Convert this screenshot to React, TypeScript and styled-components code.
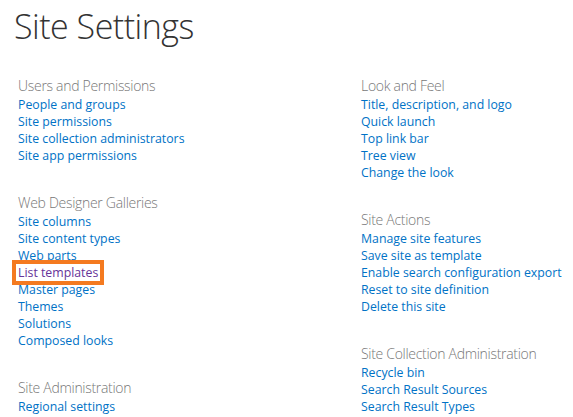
import styled, { createGlobalStyle } from "styled-components";

const GlobalStyle = createGlobalStyle`
  html, body {
    margin: 0;
    padding: 0;
    background: #ffffff;
  }
  body {
    font-family: "Segoe UI", "Open Sans", "Liberation Sans", sans-serif;
  }
`

const Page = styled.div`
  width: 573px;
  height: 417px;
  overflow: hidden;
  padding: 0 0 0 18px;
  box-sizing: border-box;
`

const Title = styled.h1`
  margin: 0 0 0 -4px;
  padding-top: 3px;
  font-size: 34px;
  font-weight: 300;
  letter-spacing: -0.5px;
  line-height: 46px;
  color: #333333;
  height: 74px;
`

const Columns = styled.div`
  display: grid;
  grid-template-columns: 343px 1fr;
`

const Column = styled.div`
  display: flex;
  flex-direction: column;
`

const Section = styled.div`
  display: flex;
  flex-direction: column;
  margin-bottom: 31px;
`

const Heading = styled.h3`
  margin: 0;
  font-size: 14px;
  font-weight: 300;
  letter-spacing: -0.3px;
  line-height: 18px;
  color: #777777;
`

const LinkList = styled.ul`
  list-style-type: none;
  margin: 0;
  padding: 0;
`

const LinkItem = styled.li`
  line-height: 17px;
  height: 17px;
`

const Link = styled.a<{ $visited?: boolean; $highlight?: boolean }>`
  font-size: 12.3px;
  color: ${(p) => (p.$visited ? "#663399" : "#0072c6")};
  text-decoration: none;
  white-space: nowrap;
  ${(p) =>
    p.$highlight &&
    `
    outline: 4px solid #f47a20;
    outline-offset: 0px;
    padding: 0 2px;
    margin-left: -2px;
  `}
`

type SectionData = {
  title: string;
  links: string[];
};

const leftSections: SectionData[] = [
  {
    title: "Users and Permissions",
    links: ["People and groups", "Site permissions", "Site collection administrators", "Site app permissions"],
  },
  {
    title: "Web Designer Galleries",
    links: [
      "Site columns",
      "Site content types",
      "Web parts",
      "List templates",
      "Master pages",
      "Themes",
      "Solutions",
      "Composed looks",
    ],
  },
  {
    title: "Site Administration",
    links: ["Regional settings"],
  },
];

const rightSections: SectionData[] = [
  {
    title: "Look and Feel",
    links: ["Title, description, and logo", "Quick launch", "Top link bar", "Tree view", "Change the look"],
  },
  {
    title: "Site Actions",
    links: [
      "Manage site features",
      "Save site as template",
      "Enable search configuration export",
      "Reset to site definition",
      "Delete this site",
    ],
  },
  {
    title: "Site Collection Administration",
    links: ["Recycle bin", "Search Result Sources", "Search Result Types"],
  },
];

const SettingsSection = ({ title, links }: SectionData) => {
  return (
    <Section>
      <Heading>{title}</Heading>
      <LinkList>
        {links.map((link) => {
          const picked = link === "List templates";
          return (
            <LinkItem key={link}>
              <Link href="#" $visited={picked} $highlight={picked}>
                {link}
              </Link>
            </LinkItem>
          );
        })}
      </LinkList>
    </Section>
  );
};

const App = () => {
  return (
    <Page>
      <GlobalStyle />
      <Title>Site Settings</Title>
      <Columns>
        <Column>
          {leftSections.map((s) => (
            <SettingsSection key={s.title} {...s} />
          ))}
        </Column>
        <Column>
          {rightSections.map((s) => (
            <SettingsSection key={s.title} {...s} />
          ))}
        </Column>
      </Columns>
    </Page>
  );
};

export default App;
